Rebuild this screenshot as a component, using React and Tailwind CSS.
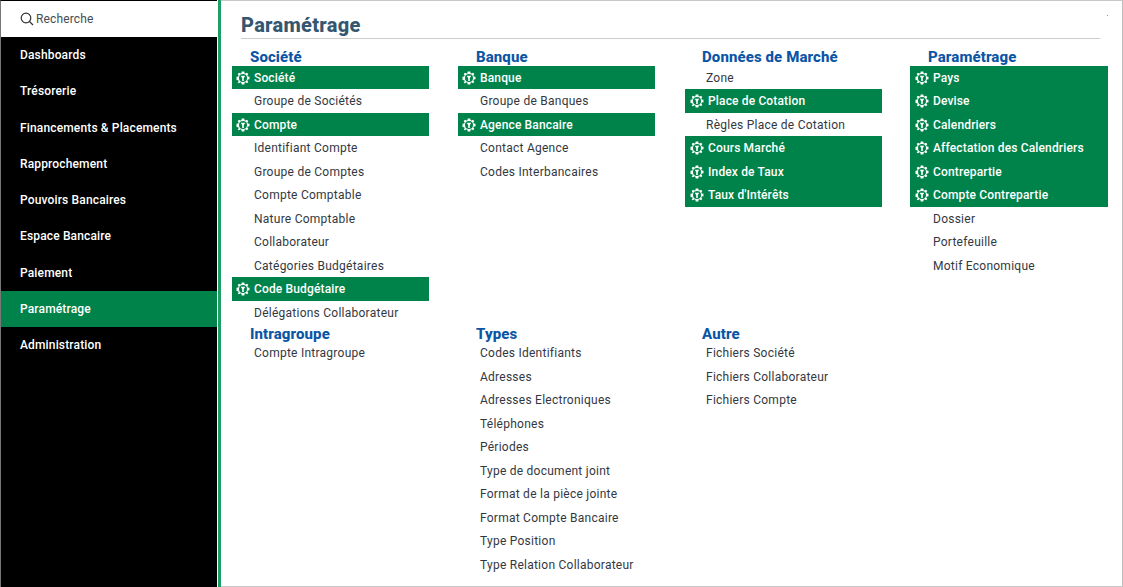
const nav = ["Dashboards","Trésorerie","Financements & Placements","Rapprochement","Pouvoirs Bancaires","Espace Bancaire","Paiement","Paramétrage","Administration"];

const Gear = () => (
  <svg width="14" height="14" viewBox="0 0 14 14" className="shrink-0">
    <path fill="#fff" fillRule="evenodd" d="M5.7.5h2.6l.3 1.7 1 .4L11 1.7 12.3 3l-1 1.4.5 1 1.7.3v2.6l-1.7.3-.5 1 1 1.4-1.300 1.300-1.400-1-1 .5-.3 1.700H5.700l-.3-1.700-1-.5-1.400 1L1.700 11.700l1-1.400-.5-1L.5 9V5.700l1.700-.3.5-1-1-1.400L3 1.700l1.400.9 1-.4zM7 3a4 4 0 1 0 0 8 4 4 0 0 0 0-8z" />
    <path fill="#fff" d="M4.800 4.800h4.400L7.800 7.300V10H6.200V7.300z" />
  </svg>
);

const Item = ({ t, g, ml = 22, ig = 4 }) =>
  g ? (
    <div className="h-[23.5px] flex items-center bg-[#00834a] text-white font-medium tracking-[0.15px]">
      <span className="mr-[4px] flex" style={{ marginLeft: ig }}><Gear /></span>
      <span>{t}</span>
    </div>
  ) : (
    <div className="h-[23.5px] flex items-center text-[#33383f] tracking-[0.25px]" style={{ paddingLeft: ml }}>{t}</div>
  );

const Col = ({ title, items, hx = 18, ml = 22, ig = 4, h2, wide }) => (
  <div className={`${wide ? "w-[198px]" : "w-[197px]"} flex flex-col`}>
    <div className={`${h2 ? "h-[17px]" : "h-[19.8px] pb-[1px]"} flex items-end`}>
      <div className={`text-[15px] leading-[16px] font-extrabold text-[#0b55a5] tracking-[0.1px] ${h2 ? "-mb-[1px]" : ""}`} style={{ paddingLeft: hx }}>{title}</div>
    </div>
    {items.map(([t, g]) => <Item key={t} t={t} g={g} ml={ml} ig={ig} />)}
  </div>
);

export default function App() {
  return (
    <div className="w-[1123px] h-[587px] flex overflow-hidden bg-white text-[12px] tracking-[0.15px] [font-family:Roboto,sans-serif]">
      <aside className="w-[217px] shrink-0 bg-black border-l border-l-[#777] border-t border-t-black flex flex-col">
        <div className="h-[36px] bg-white flex items-center pl-[19px] text-[#444b52] gap-[2px]">
          <svg width="14" height="14" viewBox="0 0 14 14" fill="none" stroke="#333" strokeWidth="1.200"><circle cx="6" cy="6" r="4.800" /><path d="M9.500 9.500L13 13" /></svg>
          <span>Recherche</span>
        </div>
        {nav.map((n) => (
          <div key={n} className={`h-[36.25px] flex items-center pl-[19px] text-white font-medium ${n === "Paramétrage" ? "bg-[#00834a]" : ""}`}>{n}</div>
        ))}
      </aside>
      <div className="w-[1px] bg-white" />
      <div className="w-[3px] bg-[#1f9e63]" />
      <main className="relative flex-1 min-w-0 border-t border-t-[#c8c8c8] border-r border-r-[#bbb] border-b border-b-[#c8c8c8] flex flex-col">
        <div className="absolute left-[886px] top-[14px] w-[1px] h-[1px] bg-[#999]" />
        <div className="ml-[20px] mr-[22px] h-[38px] border-b border-b-[#ccc] flex items-center pt-[10px]">
          <h1 className="text-[20px] font-extrabold text-[#35566f] tracking-[0.3px]">Paramétrage</h1>
        </div>
        <div className="ml-[11px] mt-[7px] flex flex-col">
          <div className="grid grid-cols-[226px_227px_225px_198px]">
            <Col title="Société" items={[["Société",1],["Groupe de Sociétés"],["Compte",1],["Identifiant Compte"],["Groupe de Comptes"],["Compte Comptable"],["Nature Comptable"],["Collaborateur"],["Catégories Budgétaires"],["Code Budgétaire",1],["Délégations Collaborateur"]]} />
            <Col title="Banque" items={[["Banque",1],["Groupe de Banques"],["Agence Bancaire",1],["Contact Agence"],["Codes Interbancaires"]]} />
            <Col title="Données de Marché" hx={17} ml={21} ig={5} items={[["Zone"],["Place de Cotation",1],["Règles Place de Cotation"],["Cours Marché",1],["Index de Taux",1],["Taux d'Intérêts",1]]} />
            <Col wide title="Paramétrage" ig={5} items={[["Pays",1],["Devise",1],["Calendriers",1],["Affectation des Calendriers",1],["Contrepartie",1],["Compte Contrepartie",1],["Dossier"],["Portefeuille"],["Motif Economique"]]} ml={23} />
          </div>
          <div className="grid grid-cols-[226px_227px_225px_198px]">
            <Col h2 title="Intragroupe" items={[["Compte Intragroupe"]]} />
            <Col h2 title="Types" items={[["Codes Identifiants"],["Adresses"],["Adresses Electroniques"],["Téléphones"],["Périodes"],["Type de document joint"],["Format de la pièce jointe"],["Format Compte Bancaire"],["Type Position"],["Type Relation Collaborateur"]]} />
            <Col h2 title="Autre" hx={17} ml={21} items={[["Fichiers Société"],["Fichiers Collaborateur"],["Fichiers Compte"]]} />
          </div>
        </div>
      </main>
    </div>
  );
}
